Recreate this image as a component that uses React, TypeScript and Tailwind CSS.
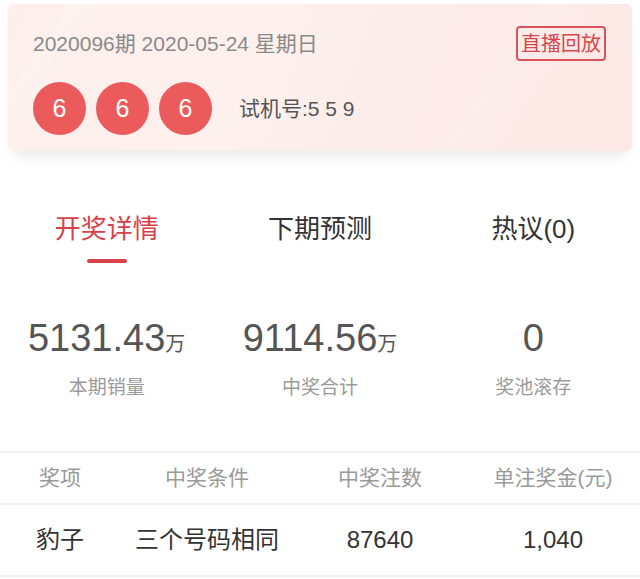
import React from 'react';

const balls = ['6', '6', '6'];

const tabs = [
  { label: '开奖详情', active: true },
  { label: '下期预测', active: false },
  { label: '热议(0)', active: false },
];

const stats = [
  { value: '5131.43', unit: '万', label: '本期销量' },
  { value: '9114.56', unit: '万', label: '中奖合计' },
  { value: '0', unit: '', label: '奖池滚存' },
];

const headers = ['奖项', '中奖条件', '中奖注数', '单注奖金(元)'];
const row = ['豹子', '三个号码相同', '87640', '1,040'];

const cols = 'grid grid-cols-[120px_174px_172px_1fr]';

const DrawCard = () => (
  <div className="px-2 pt-1">
    <div className="relative overflow-hidden rounded-md bg-[linear-gradient(110deg,#fdefec_0%,#fdf0ed_40%,#fcebe8_70%,#fce9e6_100%)] shadow-[0_10px_14px_-6px_rgba(0,0,0,0.10)] pt-[22px] pb-[16px] pl-[25px] pr-[26px]">
      <div className="pointer-events-none absolute inset-0 bg-[linear-gradient(125deg,transparent_0%,transparent_8%,rgba(255,255,255,0.25)_9%,transparent_16%,transparent_72%,rgba(255,255,255,0.15)_74%,transparent_82%)]" />
      <div className="relative flex h-[35px] items-center justify-between">
        <span className="text-[21px] text-[#8a8a8a]">2020096期 2020-05-24 星期日</span>
        <span className="flex h-[35px] items-center rounded-[4px] border-2 border-[#d9545a] px-[3px] text-[20px] text-[#d9454d]">
          直播回放
        </span>
      </div>
      <div className="relative mt-[21px] flex items-center">
        <div className="flex gap-[10px]">
          {balls.map((b, i) => (
            <div
              key={i}
              className="flex h-[53px] w-[53px] items-center justify-center rounded-full bg-[#ec5b5c] text-[25px] text-white"
            >
              {b}
            </div>
          ))}
        </div>
        <span className="ml-[27px] text-[21px] text-[#555]">试机号:5 5 9</span>
      </div>
    </div>
  </div>
);

const Tabs = () => (
  <div className="mt-[60px] grid grid-cols-3">
    {tabs.map((t) => (
      <div key={t.label} className="flex flex-col items-center">
        <span className={'text-[26px] leading-[36px] ' + (t.active ? 'text-[#d8414a]' : 'text-[#333]')}>
          {t.label}
        </span>
        <div className={'mt-[12px] h-[4px] w-[40px] rounded-sm ' + (t.active ? 'bg-[#d8434b]' : 'bg-transparent')} />
      </div>
    ))}
  </div>
);

const Stats = () => (
  <div className="mt-[53px] grid grid-cols-3">
    {stats.map((s) => (
      <div key={s.label} className="flex flex-col items-center">
        <div className="flex items-baseline text-[#555]">
          <span className="text-[38px] leading-[44px]">{s.value}</span>
          {s.unit && <span className="text-[20px]">{s.unit}</span>}
        </div>
        <span className="mt-[15px] text-[19px] leading-[26px] text-[#9a9a9a]">{s.label}</span>
      </div>
    ))}
  </div>
);

const PrizeTable = () => (
  <div className="mt-[50px]">
    <div className={cols + ' h-[54px] items-center border-y-2 border-[#efefef] text-[21px] text-[#9a9a9a]'}>
      {headers.map((h) => (
        <span key={h} className="text-center">{h}</span>
      ))}
    </div>
    <div className={cols + ' h-[72px] items-center border-b-2 border-[#efefef] text-[24px] text-[#333]'}>
      {row.map((c, i) => (
        <span key={i} className="text-center">{c}</span>
      ))}
    </div>
  </div>
);

export default function App() {
  return (
    <div className="min-h-[579px] w-full bg-white font-['Liberation_Sans','Noto_Sans_CJK_SC',sans-serif]">
      <DrawCard />
      <Tabs />
      <Stats />
      <PrizeTable />
    </div>
  );
}
